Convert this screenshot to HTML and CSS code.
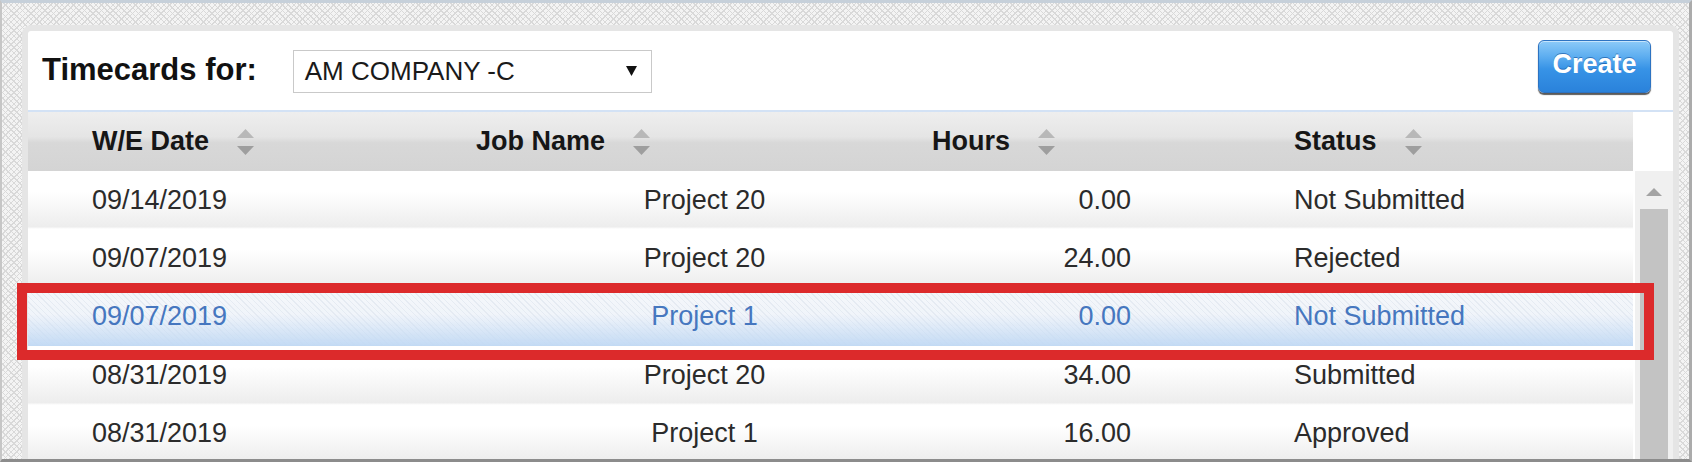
FILE: index.html
```html
<!DOCTYPE html>
<html lang="en">
  <head>
    <meta charset="utf-8" />
    <link rel="stylesheet" href="styles.css">
  </head>
  <body>
    <div class="frame">
      <div class="panel">
        <div class="toolbar">
          <span class="title">Timecards for:</span>
          <div class="select">
            <span>AM COMPANY -C</span>
            <svg class="caret" width="11" height="10" viewBox="0 0 11 10"><path d="M0 0H11L5.5 10Z" fill="#111"/></svg>
          </div>
          <button class="create" type="button">Create</button>
        </div>

        <div class="grid">
          <div class="table">
            <div class="row head">
              <div class="h c1">W/E Date <svg class="sort" width="17" height="26" viewBox="0 0 17 26"><path d="M8.5 0L17 9H0Z" fill="#b8b8b8"/><path d="M0 17H17L8.5 26Z" fill="#9e9e9e"/></svg></div>
              <div class="h c2">Job Name <svg class="sort" width="17" height="26" viewBox="0 0 17 26"><path d="M8.5 0L17 9H0Z" fill="#b8b8b8"/><path d="M0 17H17L8.5 26Z" fill="#9e9e9e"/></svg></div>
              <div class="h c3">Hours <svg class="sort" width="17" height="26" viewBox="0 0 17 26"><path d="M8.5 0L17 9H0Z" fill="#b8b8b8"/><path d="M0 17H17L8.5 26Z" fill="#9e9e9e"/></svg></div>
              <div class="h c4">Status <svg class="sort" width="17" height="26" viewBox="0 0 17 26"><path d="M8.5 0L17 9H0Z" fill="#b8b8b8"/><path d="M0 17H17L8.5 26Z" fill="#9e9e9e"/></svg></div>
            </div>
            <div class="row">
              <div class="date">09/14/2019</div>
              <div class="job">Project 20</div>
              <div class="hours">0.00</div>
              <div class="status">Not Submitted</div>
            </div>
            <div class="row">
              <div class="date">09/07/2019</div>
              <div class="job">Project 20</div>
              <div class="hours">24.00</div>
              <div class="status">Rejected</div>
            </div>
            <div class="row selected">
              <div class="date">09/07/2019</div>
              <div class="job">Project 1</div>
              <div class="hours">0.00</div>
              <div class="status">Not Submitted</div>
            </div>
            <div class="row">
              <div class="date">08/31/2019</div>
              <div class="job">Project 20</div>
              <div class="hours">34.00</div>
              <div class="status">Submitted</div>
            </div>
            <div class="row">
              <div class="date">08/31/2019</div>
              <div class="job">Project 1</div>
              <div class="hours">16.00</div>
              <div class="status">Approved</div>
            </div>
          </div>
          <div class="scroll">
            <div class="track">
              <svg class="up" width="16" height="8" viewBox="0 0 16 8"><path d="M8 0L16 8H0Z" fill="#a3a3a3"/></svg>
              <div class="thumb"></div>
            </div>
          </div>
        </div>
      </div>
      <div class="mark"></div>
    </div>
  </body>
</html>
```

FILE: styles.css
```css
body {
  margin: 0;
  background: #ffffff;
  font-family: "Liberation Sans", Arial, sans-serif;
}

.frame {
  position: relative;
  box-sizing: border-box;
  width: 1692px;
  height: 462px;
  padding: 22px 0 0 20px;
  overflow: hidden;
  border-top: 3px solid #c6d0da;
  border-left: 2px solid #c6c6c6;
  border-right: 3px solid #ababab;
  border-bottom: 3px solid #8c8c8c;
  background-color: #f4f4f4;
  background-image:
    repeating-linear-gradient(45deg, transparent 0 3px, #d9d9d9 3px 4px),
    repeating-linear-gradient(-45deg, transparent 0 3px, #d9d9d9 3px 4px);
}

.panel {
  box-sizing: border-box;
  width: 1657px;
  border: 6px solid #e5e5e5;
  border-bottom: none;
  border-radius: 9px 9px 0 0;
  background: #ffffff;
}

/* barra superior */
.toolbar {
  display: flex;
  align-items: flex-start;
  height: 79px;
  padding-left: 14px;
  border-bottom: 2px solid #d3e2f5;
}
.title {
  margin-top: 21px;
  font-size: 31px;
  line-height: 36px;
  font-weight: bold;
  color: #111111;
}
.select {
  display: flex;
  align-items: center;
  justify-content: space-between;
  box-sizing: border-box;
  width: 359px;
  height: 43px;
  margin: 19px 0 0 36px;
  padding: 0 14px 0 11px;
  border: 1px solid #c9c9c9;
  font-size: 26px;
  color: #1a1a1a;
}
.caret {
  margin-top: -2px;
}
.create {
  box-sizing: border-box;
  width: 113px;
  height: 53px;
  margin: 9px 22px 0 auto;
  padding: 0 0 4px;
  border: 1px solid #2d73c2;
  border-radius: 6px;
  background: linear-gradient(#8ccaf8 0%, #5eaef0 30%, #3793e6 55%, #2a82db 100%);
  box-shadow: 0 2px 1px #5a5a5a, inset 0 1px 0 rgba(255, 255, 255, 0.5);
  font-family: "Liberation Sans", Arial, sans-serif;
  font-size: 27px;
  font-weight: bold;
  color: #ffffff;
  text-shadow: 0 -1px 0 rgba(0, 60, 140, 0.5);
}

/* tabela */
.grid {
  display: flex;
}
.table {
  flex: 1;
}
.row {
  display: grid;
  grid-template-columns: 392px 480px 340px 1fr;
  align-items: center;
  height: 58.4px;
  font-size: 27px;
  color: #2b2b2b;
  background: linear-gradient(#ffffff 35%, #ededed 96%, #ffffff 100%);
}
.row.head {
  height: 59px;
  background: linear-gradient(#eeeeee 0%, #e5e5e5 42%, #d8d8d8 52%, #d4d4d4 100%);
}
.h {
  display: flex;
  align-items: center;
  gap: 28px;
  font-weight: bold;
  color: #161616;
}
.h.c1 { padding-left: 64px; }
.h.c2 { padding-left: 56px; }
.h.c3 { padding-left: 32px; }
.h.c4 { padding-left: 54px; }

.date { padding-left: 64px; }
.job { padding-left: 89px; text-align: center; }
.hours { padding-right: 109px; text-align: right; }
.status { padding-left: 54px; }

.row.selected {
  color: #4677bf;
  background-color: #eef2f8;
  background-image:
    linear-gradient(rgba(240, 244, 250, 0.2) 0%, rgba(232, 239, 248, 0.4) 45%, #c3daf4 100%),
    repeating-linear-gradient(45deg, #f6f8fb 0 3px, #e3e8ef 3px 4px),
    repeating-linear-gradient(-45deg, #f6f8fb 0 3px, #e3e8ef 3px 4px);
}

/* barra de rolagem */
.scroll {
  width: 40px;
  padding-top: 59px;
}
.track {
  display: flex;
  flex-direction: column;
  align-items: center;
  height: 400px;
  margin-left: 2px;
  background: #f0f0f0;
}
.up {
  margin-top: 17px;
}
.thumb {
  width: 28px;
  height: 360px;
  margin-top: 13px;
  background: #c3c3c3;
}

/* destaque */
.mark {
  position: absolute;
  left: 15px;
  top: 280px;
  box-sizing: border-box;
  width: 1637px;
  height: 77px;
  border: 10px solid #dc2a2b;
}
```
